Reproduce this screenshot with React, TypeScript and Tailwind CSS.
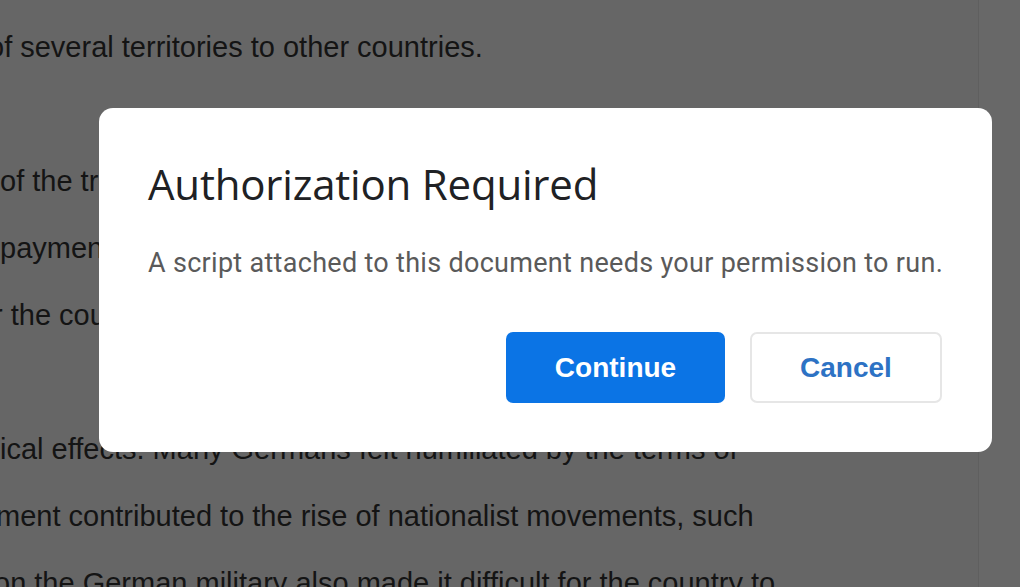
import React from "react";

const lines: { text: string; offset: string }[] = [
  { text: "of several territories to other countries.", offset: "ml-[-12px]" },
  { text: "", offset: "" },
  { text: "of the treaty had a lasting impact on the nation.", offset: "ml-[0px]" },
  { text: "payments placed a heavy burden on the economy.", offset: "ml-[0px]" },
  { text: "r the country was left weakened and divided.", offset: "ml-[-7px]" },
  { text: "", offset: "" },
  { text: "ical effects. Many Germans felt humiliated by the terms of", offset: "ml-[0px]" },
  { text: "ment contributed to the rise of nationalist movements, such", offset: "ml-[-4px]" },
  { text: "on the German military also made it difficult for the country to", offset: "ml-[-6px]" },
];

const AuthDialog = () => {
  return (
    <div className="absolute left-[99px] top-[108px] w-[893px] h-[344px] bg-white rounded-[14px] pl-[49px] pr-[50px] pt-[52px] flex flex-col">
      {/* Title */}
      <h1 className="text-[42px] leading-[48px] text-[#202124] font-['Open_Sans',sans-serif] tracking-[-0.2px]">
        Authorization Required
      </h1>

      {/* Message */}
      <p className="mt-[39px] text-[27px] leading-[32px] text-[#5a5a5a] font-['Roboto',sans-serif] tracking-[0.3px] whitespace-nowrap">
        A script attached to this document needs your permission to run.
      </p>

      {/* Actions */}
      <div className="mt-[53px] flex justify-end gap-[25px]">
        <button className="w-[219px] h-[71px] rounded-[7px] bg-[#0b74e5] text-white text-[28px] font-bold font-['Liberation_Sans',Arial,sans-serif]">
          Continue
        </button>
        <button className="w-[192px] h-[71px] rounded-[7px] bg-white border-2 border-[#e6e6e6] text-[#2d72c4] text-[28px] font-bold font-['Liberation_Sans',Arial,sans-serif]">
          Cancel
        </button>
      </div>
    </div>
  );
};

export default function App() {
  return (
    <div className="relative w-[1020px] h-[587px] overflow-hidden bg-[#666666] flex">
      {/* Document text behind the overlay */}
      <div className="flex-1 pt-[14px] overflow-hidden">
        {lines.map((l, i) => (
          <div
            key={i}
            className={`h-[67px] leading-[67px] whitespace-nowrap text-[29px] text-[#141414] font-['Liberation_Sans',Arial,sans-serif] ${l.offset}`}
          >
            {l.text}
          </div>
        ))}
      </div>

      {/* Right edge strip */}
      <div className="w-[42px] bg-[#686868] border-l border-[#5f5f5f]" />

      <AuthDialog />
    </div>
  );
}
